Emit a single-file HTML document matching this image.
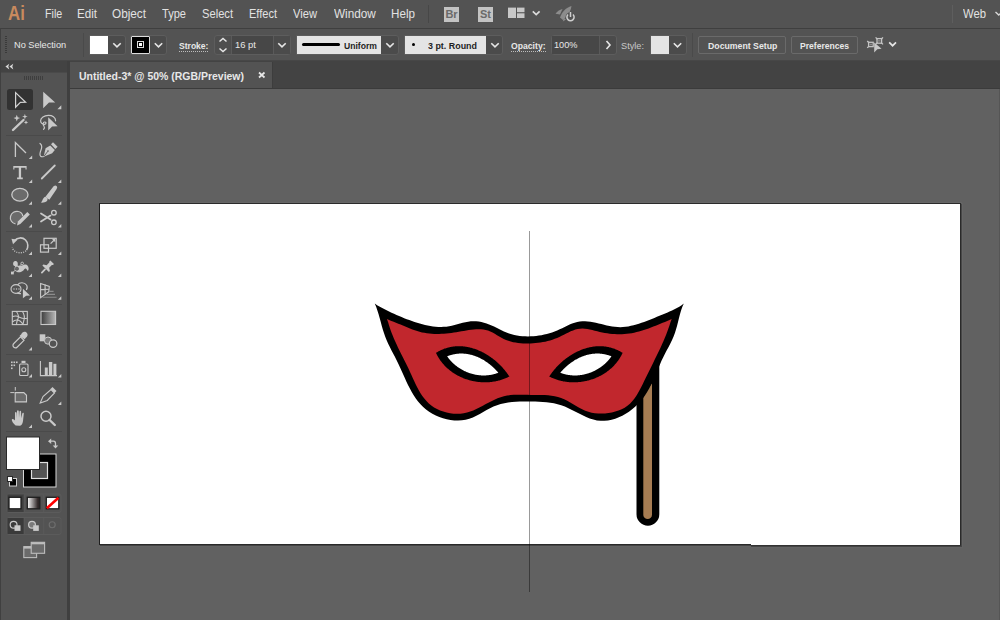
<!DOCTYPE html>
<html><head><meta charset="utf-8">
<style>
*{margin:0;padding:0;box-sizing:border-box}
html,body{width:1000px;height:620px;overflow:hidden}
body{position:relative;background:#535353;font-family:"Liberation Sans",sans-serif;color:#e6e6e6}
.a{position:absolute}
.t{position:absolute;white-space:nowrap;line-height:1;transform-origin:0 0}
.mn{font-size:12px;color:#e2e2e2;top:8px}
.cb{font-size:9.5px;color:#e8e8e8}
.b{font-weight:bold}
.box{position:absolute;border:1px solid #4a4a4a;border-radius:2px}
.chev{position:absolute}
</style></head>
<body>
<!-- menu bar -->
<div class="a" style="left:0;top:0;width:1000px;height:28px;background:#535353"></div>
<div class="t b" style="left:8px;top:3px;font-size:20px;color:#c98a5e;transform:scaleX(0.84)">Ai</div>
<div class="t mn" style="left:45px;transform:scaleX(0.89)">File</div>
<div class="t mn" style="left:77px;transform:scaleX(0.97)">Edit</div>
<div class="t mn" style="left:112px;transform:scaleX(0.98)">Object</div>
<div class="t mn" style="left:162px;transform:scaleX(0.92)">Type</div>
<div class="t mn" style="left:202px;transform:scaleX(0.93)">Select</div>
<div class="t mn" style="left:249px;transform:scaleX(0.92)">Effect</div>
<div class="t mn" style="left:293px;transform:scaleX(0.93)">View</div>
<div class="t mn" style="left:334px;transform:scaleX(0.98)">Window</div>
<div class="t mn" style="left:391px;transform:scaleX(0.97)">Help</div>
<div class="t mn" style="left:963px;transform:scaleX(0.94)">Web</div>

<!-- separator line under menu -->
<div class="a" style="left:0;top:28px;width:1000px;height:1px;background:#3f3f3f"></div>
<!-- control bar -->
<div class="a" style="left:0;top:29px;width:1000px;height:31px;background:#535353"></div>
<div class="a" style="left:0;top:60px;width:1000px;height:1px;background:#474747"></div>


<!-- control bar content -->
<div class="a" style="left:5px;top:36px;width:2px;height:18px;background:repeating-linear-gradient(#3a3a3a 0 1px,transparent 1px 2px)"></div>
<div class="t cb" style="left:14px;top:39.6px;transform:scaleX(0.968)">No Selection</div>
<div class="a" style="left:83px;top:33px;width:1px;height:24px;background:#4a4a4a"></div>
<!-- fill -->
<div class="a" style="left:89px;top:35px;width:37px;height:20px;border:1px solid #5d5d5d;border-radius:0 3px 3px 0;background:#4b4b4b"></div>
<div class="a" style="left:90px;top:36px;width:18px;height:18px;background:#fff"></div>
<svg class="a" style="left:108px;top:36px" width="18" height="18"><path d="M5.3 7.2 L9 10.8 L12.7 7.2" fill="none" stroke="#e6e6e6" stroke-width="1.6"/></svg>
<!-- stroke -->
<div class="a" style="left:130px;top:35px;width:37px;height:20px;border:1px solid #5d5d5d;border-radius:0 3px 3px 0;background:#4b4b4b"></div>
<div class="a" style="left:131px;top:36px;width:19px;height:18px;background:#000;border:1px solid #dcdcdc;border-radius:1px"></div>
<div class="a" style="left:137px;top:41px;width:7px;height:7px;border:1px solid #dcdcdc"></div>
<div class="a" style="left:139px;top:43px;width:3px;height:3px;background:#fff"></div>
<svg class="a" style="left:150px;top:36px" width="17" height="18"><path d="M4.8 7.2 L8.5 10.8 L12.2 7.2" fill="none" stroke="#e6e6e6" stroke-width="1.6"/></svg>
<!-- Stroke label -->
<div class="t cb b" style="left:179px;top:40.6px;transform:scaleX(0.900)">Stroke:</div>
<div class="a" style="left:179px;top:51px;width:29px;height:1px;background:repeating-linear-gradient(90deg,#bdbdbd 0 1px,transparent 1px 2px)"></div>
<div class="a" style="left:214px;top:35px;width:77px;height:20px;border:1px solid #5d5d5d;border-radius:3px;background:#4e4e4e"></div>
<div class="a" style="left:232px;top:36px;width:41px;height:18px;background:#474747"></div>
<div class="a" style="left:231px;top:36px;width:1px;height:18px;background:#5a5a5a"></div>
<div class="a" style="left:273px;top:36px;width:1px;height:18px;background:#5a5a5a"></div>
<div class="a" style="left:274px;top:36px;width:16px;height:18px;background:#4b4b4b"></div>
<svg class="a" style="left:215px;top:36px" width="16" height="18"><path d="M4.5 5.5 L8 2.5 L11.5 5.5 M4.5 12.5 L8 15.5 L11.5 12.5" fill="none" stroke="#e6e6e6" stroke-width="1.5"/></svg>
<div class="t cb" style="left:235px;top:39.6px;transform:scaleX(0.989)">16 pt</div>
<svg class="a" style="left:274px;top:36px" width="16" height="18"><path d="M4.3 7.2 L8 10.8 L11.7 7.2" fill="none" stroke="#e6e6e6" stroke-width="1.6"/></svg>
<!-- uniform -->
<div class="a" style="left:296px;top:35px;width:103px;height:20px;border:1px solid #5d5d5d;border-radius:0 3px 3px 0;background:#4b4b4b"></div>
<div class="a" style="left:297px;top:36px;width:84px;height:18px;background:#e4e4e4"></div>
<div class="a" style="left:302px;top:43px;width:38px;height:3px;background:#000;border-radius:1.5px"></div>
<div class="t cb b" style="left:344px;top:40.6px;color:#1e1e1e;transform:scaleX(0.905)">Uniform</div>
<svg class="a" style="left:381px;top:36px" width="17" height="18"><path d="M5.3 7.2 L9 10.8 L12.7 7.2" fill="none" stroke="#e6e6e6" stroke-width="1.6"/></svg>
<!-- 3pt round -->
<div class="a" style="left:404px;top:35px;width:99px;height:20px;border:1px solid #5d5d5d;border-radius:0 3px 3px 0;background:#4b4b4b"></div>
<div class="a" style="left:405px;top:36px;width:81px;height:18px;background:#e4e4e4"></div>
<div class="a" style="left:412px;top:43px;width:3px;height:3px;background:#000;border-radius:50%"></div>
<div class="t cb b" style="left:428px;top:40.6px;color:#1e1e1e;transform:scaleX(0.937)">3 pt. Round</div>
<svg class="a" style="left:486px;top:36px" width="17" height="18"><path d="M5.3 7.2 L9 10.8 L12.7 7.2" fill="none" stroke="#e6e6e6" stroke-width="1.6"/></svg>
<!-- opacity -->
<div class="t cb b" style="left:511px;top:40.6px;transform:scaleX(0.910)">Opacity:</div>
<div class="a" style="left:511px;top:51px;width:35px;height:1px;background:repeating-linear-gradient(90deg,#bdbdbd 0 1px,transparent 1px 2px)"></div>
<div class="a" style="left:551px;top:35px;width:66px;height:20px;border:1px solid #5d5d5d;border-radius:3px;background:#4b4b4b"></div>
<div class="a" style="left:552px;top:36px;width:47px;height:18px;background:#474747"></div>
<div class="a" style="left:599px;top:36px;width:1px;height:18px;background:#5a5a5a"></div>
<div class="t cb" style="left:554px;top:39.6px;transform:scaleX(0.968)">100%</div>
<svg class="a" style="left:600px;top:36px" width="16" height="18"><path d="M6.5 5 L10 9 L6.5 13" fill="none" stroke="#e6e6e6" stroke-width="1.6"/></svg>
<!-- style -->
<div class="t cb" style="left:621px;top:40.6px;color:#c8c8c8;transform:scaleX(0.968)">Style:</div>
<div class="a" style="left:650px;top:35px;width:37px;height:20px;border:1px solid #5d5d5d;border-radius:0 3px 3px 0;background:#4b4b4b"></div>
<div class="a" style="left:651px;top:36px;width:18px;height:18px;background:#e4e4e4"></div>
<svg class="a" style="left:669px;top:36px" width="17" height="18"><path d="M4.8 7.2 L8.5 10.8 L12.2 7.2" fill="none" stroke="#e6e6e6" stroke-width="1.6"/></svg>
<div class="a" style="left:692px;top:33px;width:1px;height:24px;background:#4a4a4a"></div>
<!-- buttons -->
<div class="a" style="left:698px;top:36px;width:88px;height:18px;border:1px solid #6a6a6a;border-radius:2px"></div>
<div class="t cb b" style="left:708px;top:40.6px;transform:scaleX(0.919)">Document Setup</div>
<div class="a" style="left:791px;top:36px;width:67px;height:18px;border:1px solid #6a6a6a;border-radius:2px"></div>
<div class="t cb b" style="left:800px;top:40.6px;transform:scaleX(0.900)">Preferences</div>
<svg class="a" style="left:862px;top:32px" width="40" height="26" viewBox="862 32 40 26">
<g fill="none" stroke="#c4c4c4" stroke-width="1.3">
<rect x="877" y="38.6" width="4.6" height="4.6"/>
<path d="M875.6 37.4 L877.4 39.2 M883 37.4 L881.2 39.2 M875.6 44.4 L877.4 42.6 M883 44.4 L881.2 42.6"/>
<rect x="868.6" y="42.3" width="4.6" height="4.3"/>
<path d="M867.2 41 L869 42.8 M867.2 47.9 L869 46.1"/>
</g>
<rect x="878" y="40.2" width="2.6" height="1.4" fill="#8a8a8a"/>
<rect x="869.6" y="43.8" width="2.6" height="1.4" fill="#8a8a8a"/>
<path d="M874.2 42.6 L881.6 48.8 L877.3 49.2 L874.2 52.4 Z" fill="#c8c8c8"/>
<path d="M889.2 42.4 L892.6 45.7 L896 42.4" fill="none" stroke="#e6e6e6" stroke-width="1.7"/>
</svg>

<!-- tab bar -->
<div class="a" style="left:69px;top:61px;width:931px;height:28px;background:#434343"></div>
<div class="a" style="left:70px;top:62px;width:202px;height:26px;background:#535353"></div>
<div class="a" style="left:272px;top:62px;width:1px;height:26px;background:#3d3d3d"></div>
<div class="a" style="left:69px;top:88px;width:931px;height:1px;background:#3b3b3b"></div>
<div class="t b" style="left:79px;top:71px;font-size:11px;color:#e8e8e8;transform:scaleX(0.952)">Untitled-3* @ 50% (RGB/Preview)</div>

<!-- canvas -->
<div class="a" style="left:70px;top:89px;width:930px;height:531px;background:#616161"></div>
<div class="a" style="left:999px;top:89px;width:1px;height:531px;background:#555"></div>

<!-- tools panel -->
<div class="a" style="left:0;top:61px;width:69px;height:559px;background:#535353"></div>
<div class="a" style="left:0;top:28px;width:1px;height:592px;background:#404040"></div>
<div class="a" style="left:1px;top:61px;width:66px;height:11px;background:#434343"></div><div class="a" style="left:1px;top:72px;width:66px;height:1px;background:#4a4a4a"></div>
<div class="a" style="left:67px;top:61px;width:3px;height:559px;background:#3f3f3f"></div>

<!-- MENUICONS --><div class="a" style="left:428px;top:5px;width:1px;height:18px;background:#474747"></div>
<div class="a" style="left:444px;top:7px;width:15px;height:15px;background:#c3c3c3"></div>
<div class="t" style="left:445.5px;top:9px;font-size:11px;color:#6a6a6a;letter-spacing:-0.2px;font-weight:bold">Br</div>
<div class="a" style="left:478px;top:7px;width:15px;height:15px;background:#c3c3c3"></div>
<div class="t" style="left:480px;top:9px;font-size:11px;color:#6a6a6a;letter-spacing:-0.2px;font-weight:bold">St</div>
<svg class="a" style="left:500px;top:0" width="90" height="28" viewBox="500 0 90 28">
<rect x="508" y="7.6" width="8" height="10.4" fill="#c8c8c8"/>
<rect x="517" y="7.6" width="7.5" height="4.6" fill="#c8c8c8"/>
<rect x="517" y="13.3" width="7.5" height="4.7" fill="#c8c8c8"/>
<path d="M532.8 11.3 L536.2 14.5 L539.6 11.3" fill="none" stroke="#dcdcdc" stroke-width="1.7"/>
<path d="M555.5 13.8 C557 11.5 559.5 9.5 562.5 9 L560 14.5 Z" fill="#8c8c8c"/>
<path d="M560 17.5 C562 12 566 7.5 571.5 6 C571 10 569 14 565.5 17.5 L563 20 Z" fill="#8c8c8c"/>
<path d="M562.8 21.5 L563.8 18 L566 19.5 Z" fill="#8c8c8c"/>
<circle cx="570.5" cy="17.2" r="5" fill="#535353"/>
<path d="M568 14.5 A3.6 3.6 0 1 0 573 14.5" fill="none" stroke="#cfcfcf" stroke-width="1.5"/>
<path d="M570.5 12 V17" stroke="#cfcfcf" stroke-width="1.5"/>
</svg>
<div class="a" style="left:952px;top:5px;width:1px;height:18px;background:#5e5e5e"></div>
<svg class="a" style="left:990px;top:0" width="10" height="28"><path d="M5.5 12 L8.8 15 L12 12" fill="none" stroke="#d8d8d8" stroke-width="1.4"/></svg>
<svg class="a" style="left:256px;top:70px" width="12" height="10"><path d="M3 2.5 L8.5 7.5 M8.5 2.5 L3 7.5" stroke="#e8e8e8" stroke-width="1.7"/></svg>
<!-- /MENUICONS -->
<!-- TOOLS --><svg class="a" style="left:0;top:0" width="70" height="620" viewBox="0 0 70 620">
<defs>
<linearGradient id="gr1" x1="0" x2="1" y1="0" y2="0"><stop offset="0" stop-color="#3c3c3c"/><stop offset="1" stop-color="#b8b8b8"/></linearGradient>
<linearGradient id="gr2" x1="0" x2="1" y1="0" y2="0"><stop offset="0" stop-color="#ffffff"/><stop offset="1" stop-color="#3a3030"/></linearGradient>
</defs>
<!-- collapse chevrons -->
<path d="M9.3 63.8 L5.4 66.6 L9.3 69.4 L8.3 66.6 Z M13.3 63.8 L9.4 66.6 L13.3 69.4 L12.3 66.6 Z" fill="#d8d8d8"/>
<!-- grip -->
<g fill="#3e3e3e"><rect x="24" y="76" width="1" height="4"/><rect x="26" y="76" width="1" height="4"/><rect x="28" y="76" width="1" height="4"/><rect x="30" y="76" width="1" height="4"/><rect x="32" y="76" width="1" height="4"/><rect x="34" y="76" width="1" height="4"/><rect x="36" y="76" width="1" height="4"/><rect x="38" y="76" width="1" height="4"/><rect x="40" y="76" width="1" height="4"/><rect x="42" y="76" width="1" height="4"/></g>
<!-- separators -->
<g fill="#4a4a4a"><rect x="6" y="135" width="56" height="1"/><rect x="6" y="231" width="56" height="1"/><rect x="6" y="304" width="56" height="1"/><rect x="6" y="354" width="56" height="1"/><rect x="6" y="381" width="56" height="1"/><rect x="6" y="431" width="56" height="1"/></g>
<!-- selected bg -->
<rect x="7" y="89" width="26" height="21" rx="2.5" fill="#323232"/>
<g fill="none" stroke="#d2d2d2" stroke-width="1.2" stroke-linejoin="miter">
<!-- selection arrow -->
<path d="M15.6 92.6 L25.6 102.2 L20.4 102.4 L15.6 107.2 Z"/>
</g>
<g fill="#c9c9c9">
<!-- direct selection -->
<path d="M43.2 91.8 L55.2 102.6 L49 102.6 L43.2 108.2 Z"/>
<!-- triangles -->
<path d="M61.3 105.3 V109.2 H57.4 Z"/>
<path d="M32.2 155.6 V159 H28.8 Z"/><path d="M32.2 179.6 V183 H28.8 Z"/><path d="M61.3 179.6 V183 H57.9 Z"/>
<path d="M32 201.3 V204.8 H28.6 Z"/><path d="M61.3 201.3 V204.8 H57.9 Z"/>
<path d="M32 224 V227.4 H28.6 Z"/><path d="M61.3 224 V227.4 H57.9 Z"/>
<path d="M32 251.5 V255 H28.6 Z"/><path d="M61.3 251.5 V255 H57.9 Z"/>
<path d="M32 273.5 V277 H28.6 Z"/><path d="M61.3 273.5 V277 H57.9 Z"/>
<path d="M32 296.2 V299.7 H28.6 Z"/><path d="M61.3 296.2 V299.7 H57.9 Z"/>
<path d="M32 347 V350.5 H28.6 Z"/>
<path d="M32 374 V377.5 H28.6 Z"/><path d="M61.3 374 V377.5 H57.9 Z"/>
<path d="M61.3 401.5 V405 H57.9 Z"/>
<path d="M32 424.5 V428 H28.6 Z"/>
</g>
<!-- magic wand -->
<path d="M13 130 L23.5 120" stroke="#c9c9c9" stroke-width="2.4" stroke-linecap="round"/>
<g fill="#c9c9c9">
<path d="M16.8 114.8 L17.7 117.2 L20.1 118.1 L17.7 119 L16.8 121.4 L15.9 119 L13.5 118.1 L15.9 117.2 Z"/>
<path d="M24.9 113.8 L25.6 115.9 L27.7 116.6 L25.6 117.3 L24.9 119.4 L24.2 117.3 L22.1 116.6 L24.2 115.9 Z"/>
<path d="M26 120.2 L26.6 121.8 L28.2 122.4 L26.6 123 L26 124.6 L25.4 123 L23.8 122.4 L25.4 121.8 Z"/>
</g>
<!-- lasso -->
<path d="M55.6 120.8 C55.6 117.2 52.2 115.3 48.4 115.4 C44.2 115.5 40.6 117.6 40.6 120.8 C40.6 123 42.4 124.4 44.5 124.3 C46.6 124.1 46.3 121.9 44.6 122 C42.9 122.1 42.6 124.6 43.9 126 C44.7 127 44.5 128.4 43.6 129.4" fill="none" stroke="#c9c9c9" stroke-width="1.2" stroke-linecap="round"/>
<path d="M48.2 117.3 L57.6 126.2 L52.1 126.6 L48.2 130.4 Z" fill="#c9c9c9"/>
<!-- curvature/anchor-like angle -->
<path d="M15.4 157 V142.6 L26 153" fill="none" stroke="#c9c9c9" stroke-width="1.3"/>
<!-- pen -->
<path d="M40 143.4 C42 144.8 42 147.5 41 150 C40 152.5 39.2 154.8 40.6 156.2 C41.5 157 42.8 156.8 43.8 156.5" fill="none" stroke="#c9c9c9" stroke-width="1.2" stroke-linecap="round"/>
<path d="M50.2 145.6 L45.6 148.3 L43.6 156.8 L52.2 153.2 L54.8 149.9 Z" fill="#c9c9c9"/>
<path d="M51 144.3 L53 142.2 L57.6 146.8 L55.4 148.9 Z" fill="#c9c9c9"/>
<path d="M44 156.3 L47.8 151.3" stroke="#535353" stroke-width="0.9"/>
<circle cx="48" cy="151" r="0.8" fill="#535353"/>
<!-- type -->
<path d="M13.3 166 H26.6 V169.6 H25.5 V167.8 H21.1 V177.6 H22.8 V179.2 H17.1 V177.6 H18.8 V167.8 H14.4 V169.6 H13.3 Z" fill="#c9c9c9"/>
<!-- line -->
<path d="M41.8 178.5 L54.8 165.5" stroke="#c9c9c9" stroke-width="1.8" stroke-linecap="round"/>
<!-- ellipse -->
<ellipse cx="19.9" cy="194.8" rx="8.1" ry="6.4" fill="#6b6b6b" stroke="#c9c9c9" stroke-width="1.3"/>
<!-- brush -->
<path d="M46.5 197.5 L54.5 187.2 C55.5 186.4 56.3 187.2 55.6 188.2 L48.3 199" stroke="#c9c9c9" stroke-width="2.6" fill="#c9c9c9"/>
<path d="M45.2 196.8 C47.5 197.5 48.2 199.5 47 201 C45.5 202.6 42.5 202.8 40.8 202.6 C42.8 201.5 42.5 197.8 45.2 196.8 Z" fill="#c9c9c9"/>
<!-- shaper -->
<path d="M15.5 224 C11.5 223 9.8 219.5 10.5 216.5 C11.3 212.8 15 210.7 18.5 211.5 C21 212 22.5 214 22.8 216.2" fill="#6b6b6b" stroke="#c9c9c9" stroke-width="1.2"/>
<path d="M17 225.6 L17.8 221.5 L27.3 212 L29.8 214.5 L20.3 224 Z" fill="#c9c9c9"/>
<!-- scissors -->
<g stroke="#c9c9c9" fill="none">
<path d="M41 213.5 L50.5 219.6 M41 221.6 L50.5 215.6" stroke-width="1.8" stroke-linecap="round"/>
<circle cx="53.9" cy="212.7" r="2.3" stroke-width="1.3"/>
<circle cx="53.9" cy="222.3" r="2.3" stroke-width="1.3"/>
</g>
<!-- rotate -->
<path d="M14.5 240.5 C17.5 237.3 22.5 237 25.5 240 C28.5 243 28.3 247.5 26.5 250" fill="none" stroke="#c9c9c9" stroke-width="1.6"/>
<path d="M26 250.8 C23 253.5 17 253.5 14 250.5 C13 249.5 12.5 248.5 12.2 247.5" fill="none" stroke="#c9c9c9" stroke-width="1.3" stroke-dasharray="1 1.3"/>
<path d="M11.5 238.8 L17.5 239.8 L13 244.3 Z" fill="#c9c9c9"/>
<!-- scale -->
<g fill="none" stroke="#c9c9c9" stroke-width="1.2">
<rect x="44" y="238.3" width="12.2" height="10"/>
<rect x="40.5" y="244.8" width="8" height="7.3"/>
<path d="M50.6 243.6 L54.6 239.7"/>
</g>
<path d="M52 239 L55.3 238.9 L55.2 242.2 Z" fill="#c9c9c9"/>
<!-- puppet warp -->
<path d="M13.2 264.8 C12.6 262.2 14.2 260.8 15.8 261.1 C17.6 261.5 18.2 263.5 17.6 265.6 C19.5 266.4 21.8 265.6 24 264.7 C26.6 263.8 28.6 265.6 28.6 268.6 C28.6 270.2 28 271.2 27.4 270.6 C26.8 269.6 26.3 268.2 25.2 268.6 C23.9 269.5 23 271.6 20.8 272.1 C18.3 272.6 15.9 272 15 270.5 C14.1 269 14.5 267.2 15.3 266.2 C14.3 265.9 13.4 265.6 13.2 264.8 Z" fill="#c9c9c9"/>
<path d="M12.4 273 L22.2 263.4" stroke="#c9c9c9" stroke-width="0.9"/>
<circle cx="16.9" cy="268.7" r="1.6" fill="#6a6a6a" stroke="#535353" stroke-width="0.8"/>
<circle cx="22.2" cy="263.4" r="1.3" fill="#535353" stroke="#c9c9c9" stroke-width="0.9"/>
<rect x="11" y="271.6" width="2.8" height="2.8" fill="#c9c9c9"/>
<!-- pin -->
<g transform="translate(46.2 268.2) rotate(45)">
<path d="M-2.6 -8.4 H2.6 V-7 L1.8 -6.2 V-2.4 L4.6 -0.6 V0.8 H-4.6 V-0.6 L-1.8 -2.4 V-6.2 L-2.6 -7 Z" fill="#c9c9c9"/>
<rect x="-0.9" y="0.8" width="1.8" height="6.2" rx="0.9" fill="#c9c9c9"/>
</g>
<!-- shape builder -->
<g fill="none" stroke="#c9c9c9" stroke-width="1.1">
<ellipse cx="16" cy="289" rx="5" ry="4.4"/>
<path d="M17.5 285 C19.5 282 24.5 282.2 26.5 285 C27.5 286.5 27.3 288.5 26.3 290"/>
<path d="M21 293.6 C19.5 293.8 18 293.5 17 293"/>
</g>
<g fill="#c9c9c9"><circle cx="14" cy="289" r="0.7"/><circle cx="16.5" cy="289" r="0.7"/><circle cx="19" cy="289" r="0.7"/></g>
<path d="M22.9 288.8 L30 295.6 L26.2 295.8 L22.9 298.3 Z" fill="#c9c9c9"/>
<!-- perspective grid -->
<g fill="none" stroke="#c9c9c9" stroke-width="1.1">
<path d="M40.6 283.4 V297.6 L48.8 291.6 L49.3 286.4 Z"/>
<path d="M45.1 284.6 V294.6 M40.6 289.6 L49 289.2"/>
</g>
<g stroke="#8c8c8c" stroke-width="1.1"><path d="M49 291.4 H53.6 M46.4 294.4 H55 M42.6 297.2 H56.6"/></g>
<!-- mesh -->
<g fill="none" stroke="#c9c9c9" stroke-width="1.1">
<rect x="12.3" y="311.4" width="15" height="13.2"/>
<path d="M16.3 311.5 C18.5 314 19 317 17.5 320 C16.8 321.5 16.5 323 16.5 324.6"/>
<path d="M12.3 316.8 C15 315.5 17.5 316 19.5 317.2 C22 318.5 24.5 318.8 27.3 318.2"/>
<path d="M22.5 311.5 C24.5 314.5 24.5 318 24 320 C23.5 322 23 323.5 23 324.6"/>
<path d="M12.3 322 C14.5 320 17.5 319.5 20 321 C21.5 322 22.5 323.5 23 324.6"/>
</g>
<!-- gradient -->
<rect x="41" y="311.3" width="14.6" height="13.2" fill="url(#gr1)" stroke="#c9c9c9" stroke-width="1.1"/>
<!-- eyedropper -->
<path d="M13.8 347.2 C12.5 346 12.8 344.5 13.8 343.5 L20.5 336.8 L24 340.3 L17.3 347 C16.3 348 14.8 348.2 13.8 347.2 Z" fill="none" stroke="#c9c9c9" stroke-width="1.2"/>
<path d="M19.5 336 L21.3 334.2 C22 331.5 25.5 330.8 27 333 C28.3 334.8 27.3 337 25.8 337.8 L24.8 339.3 Z" fill="#c9c9c9"/>
<!-- blend -->
<rect x="39.7" y="334.3" width="5.6" height="7" fill="#c9c9c9"/>
<circle cx="48" cy="340.6" r="3.6" fill="#7a7a7a" stroke="#c9c9c9" stroke-width="1"/>
<circle cx="53.1" cy="343.6" r="3.8" fill="#535353" stroke="#c9c9c9" stroke-width="1.2"/>
<!-- symbol sprayer -->
<g fill="#c9c9c9"><rect x="11" y="361.5" width="1.6" height="1.6"/><rect x="13.5" y="361.5" width="1.6" height="1.6"/><rect x="16" y="361.5" width="1.6" height="1.6"/><rect x="11" y="364.5" width="1.6" height="1.6"/><rect x="13.5" y="364.5" width="1.6" height="1.6"/><rect x="11" y="367.5" width="1.6" height="1.6"/></g>
<rect x="21.5" y="360.8" width="4" height="2.2" fill="#c9c9c9"/>
<rect x="19.6" y="364" width="8.4" height="11.5" rx="1" fill="none" stroke="#c9c9c9" stroke-width="1.1"/>
<circle cx="23.8" cy="369.8" r="2" fill="none" stroke="#c9c9c9" stroke-width="1.1"/>
<!-- graph -->
<path d="M40.4 361 V375.6 H57" fill="none" stroke="#c9c9c9" stroke-width="1.1"/>
<g fill="#c9c9c9"><rect x="44.8" y="367.5" width="3" height="8"/><rect x="48.9" y="362" width="3.4" height="13.5"/><rect x="53.4" y="363.8" width="3" height="11.7"/></g>
<!-- artboard tool -->
<path d="M10.3 392.6 H14.3 M15.3 387 V390.6" stroke="#c9c9c9" stroke-width="1"/>
<path d="M15.2 392.6 H23.8 L26.5 395.3 V401.9 H15.2 Z" fill="#6b6b6b" stroke="#c9c9c9" stroke-width="1.1"/>
<!-- slice/pencil -->
<path d="M40.2 403 L43 396.5 L51 389.5 L54.5 393 L47.3 400.5 Z" fill="none" stroke="#c9c9c9" stroke-width="1.1"/>
<path d="M50.5 389 L52.5 387 L56.5 391 L54.5 393 Z" fill="#c9c9c9"/>
<!-- hand -->
<path d="M15.6 425.6 C13.5 424 11.5 421 11.8 419.6 C12.2 418.5 13.5 419 15 420.5 L15 413 C15 411.8 16.5 411.8 16.6 413 L16.8 418 L17 411.2 C17.1 410 18.7 410 18.8 411.2 L19 417.8 L19.5 411.6 C19.6 410.4 21.1 410.5 21.1 411.7 L21.2 418.2 L22.3 413.4 C22.5 412.3 24 412.6 23.8 413.8 L23 421 C22.6 424 21.4 425.8 19.5 425.8 Z" fill="#c9c9c9"/>
<!-- zoom -->
<circle cx="46" cy="416.3" r="5" fill="none" stroke="#c9c9c9" stroke-width="1.5"/>
<path d="M49.6 420 L54.8 425" stroke="#c9c9c9" stroke-width="2.4" stroke-linecap="round"/>
</svg>
<!-- /TOOLS -->
<!-- BOTTOM --><svg class="a" style="left:0;top:430px" width="70" height="140" viewBox="0 430 70 140">
<defs>
<linearGradient id="gr3" x1="0" x2="1" y1="0" y2="0"><stop offset="0" stop-color="#ffffff"/><stop offset="0.85" stop-color="#2e2626"/></linearGradient>
</defs>
<!-- stroke swatch -->
<rect x="23.5" y="454" width="32.5" height="33" fill="#000" stroke="#d6d6d6" stroke-width="1"/>
<rect x="31.5" y="462.5" width="16" height="16" fill="#535353" stroke="#e0e0e0" stroke-width="1.2"/>
<!-- fill swatch -->
<rect x="6.5" y="437" width="33" height="32.5" fill="#fff" stroke="#2a2a2a" stroke-width="1"/>
<!-- swap -->
<path d="M50.5 441.2 H53.5 C55 441.2 55.5 442 55.5 443.5 V446" fill="none" stroke="#c9c9c9" stroke-width="1.3"/>
<path d="M48 441.2 L51.2 438.5 V444 Z M52.7 445.5 H58.3 L55.5 448.5 Z" fill="#c9c9c9"/>
<!-- default mini -->
<rect x="9.5" y="478.5" width="7" height="7.5" fill="#000" stroke="#cfcfcf" stroke-width="1"/>
<rect x="7.5" y="476.5" width="5" height="5" fill="#fff" stroke="#2a2a2a" stroke-width="1"/>
<!-- modes group -->
<rect x="7" y="494" width="54" height="18.5" rx="2" fill="none" stroke="#5b5b5b" stroke-width="1"/>
<rect x="7.5" y="494.5" width="16.5" height="17.5" fill="#3e3e3e"/>
<path d="M24.2 494.5 V512 M43.7 494.5 V512" stroke="#5b5b5b" stroke-width="1"/>
<rect x="9" y="497.3" width="12" height="11.5" fill="#fff" stroke="#1e1e1e" stroke-width="1.3"/>
<rect x="27.3" y="497.3" width="12.5" height="11.5" fill="url(#gr3)" stroke="#1e1e1e" stroke-width="1.3"/>
<rect x="46.3" y="497.3" width="12.5" height="11.5" fill="#fff" stroke="#1e1e1e" stroke-width="1.3"/>
<path d="M46.8 508.2 L58.5 497.8" stroke="#ff0000" stroke-width="2.6"/>
<!-- draw modes -->
<rect x="7" y="517.5" width="54" height="17" rx="2" fill="none" stroke="#5b5b5b" stroke-width="1"/>
<rect x="7.5" y="518" width="16.5" height="16" fill="#3a3a3a"/>
<path d="M24.2 518 V534 M43.7 518 V534" stroke="#5b5b5b" stroke-width="1"/>
<circle cx="13.6" cy="524.8" r="3.4" fill="none" stroke="#c9c9c9" stroke-width="1.2"/>
<rect x="14.5" y="525.3" width="6" height="5.6" fill="#c9c9c9"/>
<circle cx="32" cy="524.8" r="3.4" fill="#7a7a7a" stroke="#c9c9c9" stroke-width="1.2"/>
<rect x="33.2" y="525.3" width="5.6" height="5.6" fill="#c9c9c9"/>
<circle cx="52.2" cy="524.8" r="3" fill="none" stroke="#6e6e6e" stroke-width="1.1"/>
<!-- screen mode -->
<rect x="23.8" y="546.6" width="12.8" height="11" fill="#6b6b6b" stroke="#bdbdbd" stroke-width="1.1"/>
<rect x="23.8" y="546.6" width="12.8" height="2" fill="#bdbdbd"/>
<rect x="31.2" y="542.3" width="13.4" height="11" fill="#6b6b6b" stroke="#bdbdbd" stroke-width="1.1"/>
<rect x="31.2" y="542.3" width="13.4" height="2" fill="#bdbdbd"/>
</svg>
<!-- /BOTTOM -->
<!-- artboard -->
<div class="a" style="left:99px;top:202px;width:863px;height:1px;background:#666"></div>
<div class="a" style="left:962px;top:203px;width:1px;height:345px;background:#656565"></div>
<div class="a" style="left:99px;top:546px;width:864px;height:1px;background:#646464"></div>
<div class="a" style="left:751px;top:547px;width:212px;height:1px;background:#646464"></div>
<div class="a" style="left:100px;top:545px;width:862px;height:1px;background:#444"></div>
<div class="a" style="left:751px;top:546px;width:211px;height:1px;background:#444"></div>
<div class="a" style="left:961px;top:204px;width:1px;height:343px;background:#474747"></div>
<div class="a" style="left:99px;top:203px;width:862px;height:342px;background:#2a2a2a"></div>
<div class="a" style="left:751px;top:545px;width:210px;height:1px;background:#333"></div>
<div class="a" style="left:99px;top:204px;width:1px;height:341px;background:#1e1e1e"></div>
<div class="a" style="left:100px;top:204px;width:860px;height:340px;background:#fff"></div>
<div class="a" style="left:751px;top:544px;width:209px;height:1px;background:#fff"></div>
<!-- MASK --><svg class="a" style="left:0;top:0" width="1000" height="620" viewBox="0 0 1000 620">
<path d="M636.5 360 H659.3 V514.3 A11.4 11.4 0 0 1 636.5 514.3 Z" fill="#000"/>
<path d="M652 383.2 V514.7 A4.35 4.35 0 0 1 643.3 514.7 V395.5 Z" fill="#a67c52"/>
<path d="M683.80 303.60 L681.58 305.27 679.26 306.71 676.89 308.05 674.48 309.29 672.03 310.46 669.56 311.57 667.06 312.65 664.54 313.70 662.01 314.74 659.48 315.79 656.94 316.85 654.39 317.89 651.83 318.93 649.27 319.94 646.69 320.93 644.10 321.88 641.50 322.79 638.89 323.66 636.26 324.46 633.62 325.20 630.96 325.84 628.30 326.38 625.63 326.79 622.95 327.06 620.26 327.18 617.57 327.11 614.87 326.87 612.18 326.48 609.47 325.98 606.77 325.39 604.05 324.74 601.34 324.08 598.61 323.41 595.89 322.78 593.16 322.22 590.44 321.75 587.73 321.41 585.04 321.23 582.39 321.24 579.76 321.46 577.18 321.94 574.64 322.64 572.12 323.54 569.63 324.59 567.15 325.74 564.68 326.94 562.20 328.16 559.70 329.36 557.18 330.47 554.64 331.49 552.07 332.42 549.47 333.24 546.85 333.98 544.21 334.61 541.55 335.15 538.87 335.59 536.17 335.94 533.45 336.19 530.72 336.34 527.97 336.40 525.21 336.35 522.46 336.20 519.71 335.93 516.98 335.53 514.29 334.99 511.63 334.31 509.02 333.47 506.46 332.49 503.94 331.39 501.45 330.22 498.98 329.00 496.52 327.78 494.05 326.58 491.57 325.44 489.07 324.40 486.54 323.48 483.98 322.70 481.39 322.08 478.78 321.61 476.14 321.33 473.49 321.24 470.81 321.35 468.13 321.68 465.43 322.19 462.72 322.84 460.00 323.57 457.28 324.32 454.56 325.06 451.84 325.72 449.12 326.26 446.41 326.64 443.71 326.87 441.02 326.96 438.33 326.92 435.65 326.75 432.98 326.47 430.32 326.08 427.66 325.59 425.02 325.01 422.38 324.34 419.75 323.61 417.13 322.81 414.52 321.95 411.92 321.05 409.32 320.11 406.74 319.13 404.17 318.13 401.60 317.10 399.06 316.05 396.53 314.96 394.01 313.85 391.52 312.70 389.05 311.52 386.60 310.31 384.17 309.07 381.77 307.79 379.40 306.48 377.06 305.13 374.80 303.60 L376.23 307.09 377.47 310.68 378.60 314.36 379.66 318.09 380.69 321.86 381.72 325.63 382.80 329.38 383.96 333.08 385.24 336.70 386.65 340.22 388.19 343.67 389.83 347.06 391.53 350.41 393.27 353.75 395.01 357.10 396.74 360.49 398.43 363.93 400.05 367.43 401.65 370.97 403.23 374.54 404.83 378.11 406.45 381.65 408.13 385.16 409.88 388.61 411.73 391.99 413.69 395.26 415.80 398.41 418.07 401.43 420.51 404.28 423.17 406.96 426.04 409.44 429.12 411.70 432.38 413.74 435.79 415.54 439.33 417.09 442.98 418.37 446.70 419.37 450.48 420.08 454.28 420.48 458.09 420.56 461.88 420.31 465.62 419.71 469.29 418.76 472.86 417.44 476.35 415.82 479.79 413.99 483.20 412.06 486.60 410.11 490.02 408.25 493.49 406.56 497.04 405.14 500.66 404.02 504.37 403.16 508.14 402.52 511.97 402.06 515.84 401.77 519.73 401.60 523.63 401.53 527.53 401.52 531.40 401.54 535.23 401.60 539.04 401.72 542.82 401.93 546.56 402.26 550.28 402.72 553.96 403.36 557.62 404.20 561.24 405.27 564.84 406.59 568.42 408.15 571.97 409.88 575.52 411.69 579.06 413.53 582.61 415.31 586.16 416.96 589.73 418.41 593.33 419.58 596.95 420.40 600.61 420.82 604.29 420.83 607.97 420.47 611.62 419.76 615.24 418.72 618.81 417.36 622.30 415.72 625.69 413.82 628.97 411.68 632.12 409.31 635.12 406.75 637.95 404.02 640.59 401.14 643.03 398.13 645.25 395.00 647.29 391.79 649.17 388.49 650.92 385.12 652.55 381.69 654.11 378.21 655.61 374.71 657.09 371.18 658.56 367.65 660.05 364.13 661.60 360.62 663.22 357.15 664.95 353.72 666.75 350.33 668.58 346.94 670.37 343.54 672.05 340.10 673.58 336.60 674.91 333.01 676.06 329.35 677.08 325.64 678.02 321.89 678.93 318.14 679.90 314.41 680.98 310.72 682.25 307.11 683.80 303.60 Z" fill="#000"/>
<path d="M671.70 319.00 L669.47 320.05 667.22 320.97 664.94 321.90 662.65 322.85 660.35 323.80 658.03 324.75 655.69 325.69 653.35 326.61 650.98 327.52 648.61 328.39 646.23 329.23 643.84 330.02 641.43 330.77 639.02 331.46 636.60 332.08 634.18 332.64 631.75 333.13 629.32 333.53 626.88 333.84 624.43 334.07 621.99 334.20 619.54 334.25 617.08 334.22 614.62 334.11 612.16 333.93 609.69 333.66 607.22 333.33 604.74 332.92 602.25 332.45 599.76 331.91 597.26 331.30 594.77 330.66 592.27 330.03 589.78 329.46 587.31 328.98 584.85 328.66 582.42 328.52 580.03 328.63 577.67 329.00 575.34 329.60 573.03 330.39 570.74 331.33 568.46 332.38 566.19 333.51 563.93 334.66 561.65 335.81 559.37 336.92 557.08 337.94 554.76 338.86 552.43 339.69 550.08 340.42 547.71 341.07 545.33 341.63 542.92 342.11 540.50 342.51 538.06 342.84 535.61 343.10 533.13 343.29 530.64 343.41 528.13 343.48 525.61 343.47 523.09 343.40 520.57 343.24 518.06 342.98 515.57 342.62 513.12 342.14 510.70 341.54 508.34 340.79 506.01 339.91 503.73 338.90 501.47 337.76 499.24 336.51 497.02 335.17 494.79 333.83 492.56 332.56 490.30 331.45 488.01 330.56 485.69 329.91 483.34 329.47 480.96 329.22 478.56 329.14 476.14 329.20 473.70 329.39 471.24 329.67 468.77 330.03 466.29 330.45 463.81 330.90 461.32 331.36 458.84 331.80 456.36 332.22 453.88 332.61 451.40 332.95 448.92 333.26 446.45 333.51 443.98 333.72 441.52 333.86 439.06 333.95 436.61 333.96 434.16 333.91 431.71 333.78 429.27 333.56 426.84 333.26 424.41 332.87 421.99 332.38 419.58 331.78 417.17 331.09 414.77 330.31 412.38 329.46 410.00 328.54 407.63 327.59 405.27 326.61 402.92 325.61 400.58 324.62 398.26 323.64 395.95 322.69 393.66 321.78 391.38 320.91 389.12 320.05 386.90 319.00 L388.12 322.17 389.07 325.49 390.12 328.75 391.26 331.95 392.48 335.11 393.77 338.22 395.12 341.30 396.52 344.36 397.96 347.39 399.44 350.41 400.93 353.42 402.45 356.43 403.97 359.45 405.48 362.48 406.98 365.53 408.46 368.60 409.90 371.71 411.32 374.85 412.74 377.99 414.17 381.12 415.64 384.22 417.17 387.27 418.78 390.25 420.50 393.15 422.33 395.94 424.31 398.60 426.46 401.12 428.79 403.46 431.31 405.58 434.05 407.44 436.99 409.05 440.09 410.43 443.33 411.58 446.67 412.51 450.07 413.20 453.52 413.63 456.97 413.80 460.39 413.69 463.75 413.29 467.02 412.59 470.19 411.62 473.29 410.42 476.34 409.04 479.36 407.54 482.37 405.95 485.37 404.33 488.38 402.72 491.41 401.16 494.47 399.69 497.56 398.35 500.70 397.18 503.89 396.23 507.14 395.54 510.45 395.09 513.80 394.83 517.20 394.72 520.63 394.72 524.08 394.78 527.55 394.86 531.02 394.91 534.48 394.92 537.93 394.94 541.36 394.99 544.77 395.12 548.14 395.35 551.46 395.72 554.74 396.28 557.96 397.04 561.12 398.05 564.21 399.34 567.24 400.85 570.23 402.51 573.20 404.26 576.17 406.03 579.16 407.74 582.18 409.32 585.26 410.71 588.41 411.84 591.63 412.67 594.91 413.24 598.25 413.54 601.62 413.59 605.03 413.41 608.45 413.01 611.86 412.40 615.24 411.57 618.54 410.51 621.70 409.20 624.67 407.63 627.43 405.78 629.93 403.65 632.21 401.28 634.30 398.71 636.22 395.96 638.00 393.08 639.67 390.09 641.25 387.04 642.79 383.95 644.29 380.86 645.79 377.79 647.28 374.74 648.77 371.71 650.26 368.68 651.75 365.66 653.24 362.63 654.73 359.61 656.23 356.57 657.71 353.53 659.18 350.47 660.62 347.41 662.04 344.32 663.42 341.22 664.75 338.10 666.03 334.96 667.25 331.80 668.40 328.61 669.48 325.40 670.48 322.15 671.70 319.00 Z" fill="#c1272d"/>
<path d="M436.00 352.80 L436.54 352.53 437.21 352.13 437.88 351.74 438.55 351.37 439.22 351.01 439.90 350.66 440.58 350.33 441.26 350.01 441.94 349.70 442.62 349.41 443.31 349.13 443.99 348.87 444.68 348.62 445.37 348.38 446.06 348.15 446.76 347.94 447.45 347.74 448.15 347.55 448.84 347.38 449.54 347.22 450.24 347.07 450.94 346.93 451.63 346.80 452.33 346.69 453.03 346.59 453.74 346.50 454.44 346.42 455.14 346.36 455.84 346.30 456.54 346.26 457.24 346.23 457.95 346.21 458.65 346.20 459.35 346.20 460.05 346.21 460.75 346.24 461.45 346.27 462.15 346.32 462.85 346.37 463.55 346.44 464.25 346.52 464.94 346.61 465.64 346.70 466.33 346.81 467.03 346.93 467.72 347.06 468.41 347.20 469.10 347.34 469.79 347.50 470.48 347.67 471.16 347.84 471.85 348.03 472.53 348.22 473.21 348.43 473.89 348.64 474.56 348.86 475.24 349.09 475.91 349.33 476.58 349.58 477.24 349.84 477.91 350.11 478.57 350.38 479.23 350.66 479.89 350.95 480.54 351.25 481.19 351.56 481.84 351.87 482.49 352.19 483.13 352.52 483.77 352.86 484.40 353.21 485.03 353.56 485.66 353.92 486.29 354.28 486.91 354.66 487.53 355.04 488.14 355.43 488.75 355.82 489.36 356.22 489.96 356.63 490.56 357.04 491.15 357.47 491.74 357.89 492.33 358.33 492.91 358.77 493.49 359.21 494.06 359.66 494.63 360.12 495.19 360.58 495.75 361.05 496.30 361.53 496.85 362.01 497.39 362.49 497.93 362.98 498.46 363.48 498.99 363.98 499.51 364.48 500.02 365.00 500.53 365.51 501.04 366.03 501.54 366.55 502.03 367.08 502.52 367.62 503.00 368.15 503.47 368.70 503.94 369.24 504.40 369.79 504.86 370.35 505.31 370.90 505.75 371.46 506.19 372.03 506.62 372.60 507.04 373.17 507.46 373.74 507.87 374.32 508.27 374.90 508.67 375.49 509.06 376.08 509.50 376.60 L508.81 376.79 508.16 377.12 507.50 377.43 506.84 377.73 506.18 378.02 505.51 378.31 504.84 378.58 504.17 378.84 503.49 379.09 502.81 379.34 502.13 379.57 501.44 379.80 500.75 380.01 500.06 380.21 499.37 380.41 498.67 380.59 497.97 380.77 497.27 380.94 496.57 381.09 495.86 381.24 495.16 381.38 494.45 381.50 493.73 381.62 493.02 381.73 492.31 381.83 491.59 381.92 490.88 382.00 490.16 382.07 489.44 382.14 488.72 382.19 488.00 382.23 487.28 382.27 486.56 382.29 485.84 382.31 485.12 382.32 484.40 382.31 483.68 382.30 482.96 382.28 482.23 382.25 481.51 382.21 480.79 382.17 480.07 382.11 479.35 382.05 478.64 381.97 477.92 381.89 477.20 381.80 476.49 381.70 475.78 381.59 475.06 381.47 474.35 381.34 473.64 381.20 472.94 381.06 472.23 380.91 471.53 380.74 470.83 380.57 470.13 380.39 469.43 380.20 468.74 380.01 468.05 379.80 467.36 379.59 466.68 379.37 465.99 379.14 465.31 378.90 464.64 378.65 463.97 378.39 463.30 378.13 462.63 377.86 461.97 377.58 461.31 377.29 460.66 376.99 460.01 376.68 459.36 376.37 458.72 376.05 458.08 375.72 457.45 375.38 456.82 375.03 456.20 374.67 455.58 374.31 454.97 373.94 454.36 373.56 453.76 373.17 453.16 372.78 452.57 372.38 451.98 371.97 451.40 371.55 450.83 371.12 450.26 370.69 449.69 370.24 449.14 369.79 448.59 369.33 448.04 368.87 447.51 368.40 446.98 367.91 446.45 367.43 445.94 366.93 445.43 366.42 444.93 365.91 444.43 365.39 443.94 364.87 443.46 364.33 442.99 363.79 442.52 363.24 442.07 362.68 441.62 362.12 441.18 361.55 440.75 360.97 440.32 360.38 439.91 359.79 439.50 359.19 439.10 358.58 438.71 357.96 438.33 357.34 437.96 356.71 437.60 356.07 437.24 355.43 436.90 354.78 436.56 354.12 436.24 353.45 436.00 352.80 Z M622.60 352.80 L622.06 352.53 621.39 352.13 620.72 351.74 620.05 351.37 619.38 351.01 618.70 350.66 618.02 350.33 617.34 350.01 616.66 349.70 615.98 349.41 615.29 349.13 614.61 348.87 613.92 348.62 613.23 348.38 612.54 348.15 611.84 347.94 611.15 347.74 610.45 347.55 609.76 347.38 609.06 347.22 608.36 347.07 607.66 346.93 606.97 346.80 606.27 346.69 605.57 346.59 604.86 346.50 604.16 346.42 603.46 346.36 602.76 346.30 602.06 346.26 601.36 346.23 600.65 346.21 599.95 346.20 599.25 346.20 598.55 346.21 597.85 346.24 597.15 346.27 596.45 346.32 595.75 346.37 595.05 346.44 594.35 346.52 593.66 346.61 592.96 346.70 592.27 346.81 591.57 346.93 590.88 347.06 590.19 347.20 589.50 347.34 588.81 347.50 588.12 347.67 587.44 347.84 586.75 348.03 586.07 348.22 585.39 348.43 584.71 348.64 584.04 348.86 583.36 349.09 582.69 349.33 582.02 349.58 581.36 349.84 580.69 350.11 580.03 350.38 579.37 350.66 578.71 350.95 578.06 351.25 577.41 351.56 576.76 351.87 576.11 352.19 575.47 352.52 574.83 352.86 574.20 353.21 573.57 353.56 572.94 353.92 572.31 354.28 571.69 354.66 571.07 355.04 570.46 355.43 569.85 355.82 569.24 356.22 568.64 356.63 568.04 357.04 567.45 357.47 566.86 357.89 566.27 358.33 565.69 358.77 565.11 359.21 564.54 359.66 563.97 360.12 563.41 360.58 562.85 361.05 562.30 361.53 561.75 362.01 561.21 362.49 560.67 362.98 560.14 363.48 559.61 363.98 559.09 364.48 558.58 365.00 558.07 365.51 557.56 366.03 557.06 366.55 556.57 367.08 556.08 367.62 555.60 368.15 555.13 368.70 554.66 369.24 554.20 369.79 553.74 370.35 553.29 370.90 552.85 371.46 552.41 372.03 551.98 372.60 551.56 373.17 551.14 373.74 550.73 374.32 550.33 374.90 549.93 375.49 549.54 376.08 549.10 376.60 L549.79 376.79 550.44 377.12 551.10 377.43 551.76 377.73 552.42 378.02 553.09 378.31 553.76 378.58 554.43 378.84 555.11 379.09 555.79 379.34 556.47 379.57 557.16 379.80 557.85 380.01 558.54 380.21 559.23 380.41 559.93 380.59 560.63 380.77 561.33 380.94 562.03 381.09 562.74 381.24 563.44 381.38 564.15 381.50 564.87 381.62 565.58 381.73 566.29 381.83 567.01 381.92 567.72 382.00 568.44 382.07 569.16 382.14 569.88 382.19 570.60 382.23 571.32 382.27 572.04 382.29 572.76 382.31 573.48 382.32 574.20 382.31 574.92 382.30 575.64 382.28 576.37 382.25 577.09 382.21 577.81 382.17 578.53 382.11 579.25 382.05 579.96 381.97 580.68 381.89 581.40 381.80 582.11 381.70 582.82 381.59 583.54 381.47 584.25 381.34 584.96 381.20 585.66 381.06 586.37 380.91 587.07 380.74 587.77 380.57 588.47 380.39 589.17 380.20 589.86 380.01 590.55 379.80 591.24 379.59 591.92 379.37 592.61 379.14 593.29 378.90 593.96 378.65 594.63 378.39 595.30 378.13 595.97 377.86 596.63 377.58 597.29 377.29 597.94 376.99 598.59 376.68 599.24 376.37 599.88 376.05 600.52 375.72 601.15 375.38 601.78 375.03 602.40 374.67 603.02 374.31 603.63 373.94 604.24 373.56 604.84 373.17 605.44 372.78 606.03 372.38 606.62 371.97 607.20 371.55 607.77 371.12 608.34 370.69 608.91 370.24 609.46 369.79 610.01 369.33 610.56 368.87 611.09 368.40 611.62 367.91 612.15 367.43 612.66 366.93 613.17 366.42 613.67 365.91 614.17 365.39 614.66 364.87 615.14 364.33 615.61 363.79 616.08 363.24 616.53 362.68 616.98 362.12 617.42 361.55 617.85 360.97 618.28 360.38 618.69 359.79 619.10 359.19 619.50 358.58 619.89 357.96 620.27 357.34 620.64 356.71 621.00 356.07 621.36 355.43 621.70 354.78 622.04 354.12 622.36 353.45 622.60 352.80 Z" fill="#000"/>
<path d="M447.00 356.20 L447.42 356.22 447.90 356.04 448.39 355.86 448.87 355.68 449.36 355.52 449.84 355.36 450.33 355.21 450.81 355.06 451.30 354.92 451.78 354.79 452.27 354.67 452.75 354.55 453.24 354.44 453.72 354.34 454.21 354.24 454.69 354.15 455.18 354.06 455.66 353.99 456.14 353.91 456.63 353.85 457.11 353.79 457.59 353.74 458.08 353.70 458.56 353.66 459.04 353.62 459.52 353.60 460.00 353.58 460.48 353.56 460.96 353.56 461.44 353.56 461.92 353.56 462.40 353.57 462.88 353.59 463.35 353.61 463.83 353.64 464.30 353.67 464.78 353.71 465.25 353.76 465.72 353.81 466.20 353.87 466.67 353.93 467.14 354.00 467.61 354.07 468.07 354.15 468.54 354.24 469.01 354.33 469.47 354.42 469.94 354.52 470.40 354.63 470.86 354.74 471.32 354.86 471.78 354.98 472.24 355.11 472.70 355.24 473.15 355.38 473.61 355.52 474.06 355.67 474.51 355.83 474.96 355.98 475.41 356.15 475.86 356.31 476.31 356.49 476.75 356.66 477.19 356.85 477.64 357.03 478.08 357.22 478.51 357.42 478.95 357.62 479.39 357.83 479.82 358.04 480.25 358.25 480.68 358.47 481.11 358.69 481.53 358.92 481.96 359.15 482.38 359.38 482.80 359.62 483.22 359.87 483.64 360.12 484.05 360.37 484.47 360.62 484.88 360.88 485.29 361.15 485.69 361.41 486.10 361.69 486.50 361.96 486.90 362.24 487.30 362.52 487.70 362.81 488.09 363.10 488.48 363.39 488.87 363.69 489.26 363.99 489.64 364.29 490.03 364.60 490.41 364.90 490.78 365.22 491.16 365.53 491.53 365.85 491.90 366.18 492.27 366.50 492.64 366.83 493.00 367.16 493.36 367.50 493.72 367.83 494.07 368.17 494.42 368.52 494.77 368.86 495.12 369.21 495.47 369.56 495.81 369.91 496.15 370.27 496.48 370.63 496.82 370.99 497.15 371.35 497.47 371.72 497.80 372.08 498.12 372.46 498.50 372.70 L498.05 372.83 497.58 373.00 497.11 373.17 496.64 373.33 496.17 373.49 495.70 373.64 495.23 373.79 494.75 373.93 494.28 374.06 493.80 374.18 493.32 374.30 492.84 374.42 492.36 374.53 491.88 374.63 491.40 374.72 490.92 374.81 490.43 374.90 489.95 374.97 489.47 375.04 488.98 375.11 488.50 375.17 488.01 375.22 487.52 375.27 487.04 375.31 486.55 375.35 486.07 375.38 485.58 375.41 485.09 375.43 484.60 375.44 484.12 375.45 483.63 375.45 483.14 375.45 482.66 375.44 482.17 375.42 481.68 375.40 481.20 375.38 480.71 375.34 480.23 375.31 479.74 375.26 479.26 375.22 478.77 375.16 478.29 375.10 477.81 375.04 477.32 374.97 476.84 374.90 476.36 374.82 475.88 374.73 475.41 374.64 474.93 374.54 474.45 374.44 473.98 374.33 473.50 374.22 473.03 374.11 472.56 373.98 472.09 373.86 471.62 373.73 471.15 373.59 470.68 373.45 470.22 373.30 469.76 373.15 469.29 372.99 468.83 372.83 468.38 372.66 467.92 372.49 467.46 372.31 467.01 372.13 466.56 371.94 466.11 371.75 465.66 371.55 465.22 371.35 464.78 371.15 464.34 370.94 463.90 370.72 463.46 370.50 463.03 370.28 462.60 370.05 462.17 369.81 461.74 369.58 461.32 369.33 460.89 369.09 460.48 368.83 460.06 368.58 459.65 368.32 459.24 368.05 458.83 367.78 458.42 367.51 458.02 367.23 457.62 366.95 457.23 366.66 456.83 366.37 456.44 366.07 456.06 365.77 455.67 365.47 455.29 365.16 454.92 364.85 454.55 364.53 454.18 364.21 453.81 363.88 453.45 363.55 453.09 363.22 452.73 362.88 452.38 362.54 452.04 362.20 451.69 361.85 451.35 361.49 451.02 361.14 450.68 360.78 450.36 360.41 450.03 360.04 449.71 359.67 449.40 359.29 449.09 358.91 448.78 358.53 448.48 358.14 448.18 357.75 447.88 357.35 447.60 356.96 447.31 356.55 447.00 356.20 Z M611.60 356.20 L611.18 356.22 610.70 356.04 610.21 355.86 609.73 355.68 609.24 355.52 608.76 355.36 608.27 355.21 607.79 355.06 607.30 354.92 606.82 354.79 606.33 354.67 605.85 354.55 605.36 354.44 604.88 354.34 604.39 354.24 603.91 354.15 603.42 354.06 602.94 353.99 602.46 353.91 601.97 353.85 601.49 353.79 601.01 353.74 600.52 353.70 600.04 353.66 599.56 353.62 599.08 353.60 598.60 353.58 598.12 353.56 597.64 353.56 597.16 353.56 596.68 353.56 596.20 353.57 595.72 353.59 595.25 353.61 594.77 353.64 594.30 353.67 593.82 353.71 593.35 353.76 592.88 353.81 592.40 353.87 591.93 353.93 591.46 354.00 590.99 354.07 590.53 354.15 590.06 354.24 589.59 354.33 589.13 354.42 588.66 354.52 588.20 354.63 587.74 354.74 587.28 354.86 586.82 354.98 586.36 355.11 585.90 355.24 585.45 355.38 584.99 355.52 584.54 355.67 584.09 355.83 583.64 355.98 583.19 356.15 582.74 356.31 582.29 356.49 581.85 356.66 581.41 356.85 580.96 357.03 580.52 357.22 580.09 357.42 579.65 357.62 579.21 357.83 578.78 358.04 578.35 358.25 577.92 358.47 577.49 358.69 577.07 358.92 576.64 359.15 576.22 359.38 575.80 359.62 575.38 359.87 574.96 360.12 574.55 360.37 574.13 360.62 573.72 360.88 573.31 361.15 572.91 361.41 572.50 361.69 572.10 361.96 571.70 362.24 571.30 362.52 570.90 362.81 570.51 363.10 570.12 363.39 569.73 363.69 569.34 363.99 568.96 364.29 568.57 364.60 568.19 364.90 567.82 365.22 567.44 365.53 567.07 365.85 566.70 366.18 566.33 366.50 565.96 366.83 565.60 367.16 565.24 367.50 564.88 367.83 564.53 368.17 564.18 368.52 563.83 368.86 563.48 369.21 563.13 369.56 562.79 369.91 562.45 370.27 562.12 370.63 561.78 370.99 561.45 371.35 561.13 371.72 560.80 372.08 560.48 372.46 560.10 372.70 L560.55 372.83 561.02 373.00 561.49 373.17 561.96 373.33 562.43 373.49 562.90 373.64 563.37 373.79 563.85 373.93 564.32 374.06 564.80 374.18 565.28 374.30 565.76 374.42 566.24 374.53 566.72 374.63 567.20 374.72 567.68 374.81 568.17 374.90 568.65 374.97 569.13 375.04 569.62 375.11 570.10 375.17 570.59 375.22 571.08 375.27 571.56 375.31 572.05 375.35 572.53 375.38 573.02 375.41 573.51 375.43 574.00 375.44 574.48 375.45 574.97 375.45 575.46 375.45 575.94 375.44 576.43 375.42 576.92 375.40 577.40 375.38 577.89 375.34 578.37 375.31 578.86 375.26 579.34 375.22 579.83 375.16 580.31 375.10 580.79 375.04 581.28 374.97 581.76 374.90 582.24 374.82 582.72 374.73 583.19 374.64 583.67 374.54 584.15 374.44 584.62 374.33 585.10 374.22 585.57 374.11 586.04 373.98 586.51 373.86 586.98 373.73 587.45 373.59 587.92 373.45 588.38 373.30 588.84 373.15 589.31 372.99 589.77 372.83 590.22 372.66 590.68 372.49 591.14 372.31 591.59 372.13 592.04 371.94 592.49 371.75 592.94 371.55 593.38 371.35 593.82 371.15 594.26 370.94 594.70 370.72 595.14 370.50 595.57 370.28 596.00 370.05 596.43 369.81 596.86 369.58 597.28 369.33 597.71 369.09 598.12 368.83 598.54 368.58 598.95 368.32 599.36 368.05 599.77 367.78 600.18 367.51 600.58 367.23 600.98 366.95 601.37 366.66 601.77 366.37 602.16 366.07 602.54 365.77 602.93 365.47 603.31 365.16 603.68 364.85 604.05 364.53 604.42 364.21 604.79 363.88 605.15 363.55 605.51 363.22 605.87 362.88 606.22 362.54 606.56 362.20 606.91 361.85 607.25 361.49 607.58 361.14 607.92 360.78 608.24 360.41 608.57 360.04 608.89 359.67 609.20 359.29 609.51 358.91 609.82 358.53 610.12 358.14 610.42 357.75 610.72 357.35 611.00 356.96 611.29 356.55 611.60 356.20 Z" fill="#fff"/>
<rect x="529" y="231" width="1" height="361" fill="#000" fill-opacity="0.4"/>
</svg><!-- /MASK -->
</body></html>
